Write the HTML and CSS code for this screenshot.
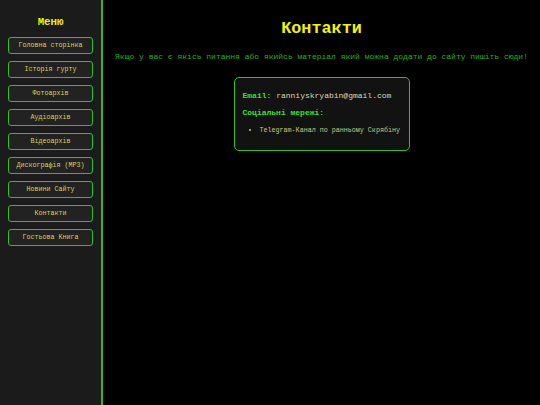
FILE: index.html
```html
<!DOCTYPE html>
<html lang="uk">
<head>
<meta charset="utf-8">
<title>Контакти</title>
<link rel="stylesheet" href="styles.css">
</head>
<body>
<div class="layout">
  <nav class="sidebar">
    <div class="menu-title">Меню</div>
    <a class="btn" href="#">Головна сторінка</a>
    <a class="btn" href="#">Історія гурту</a>
    <a class="btn" href="#">Фотоархів</a>
    <a class="btn" href="#">Аудіоархів</a>
    <a class="btn" href="#">Відеоархів</a>
    <a class="btn" href="#">Дискографія (MP3)</a>
    <a class="btn" href="#">Новини Сайту</a>
    <a class="btn" href="#">Контакти</a>
    <a class="btn" href="#">Гостьова Книга</a>
  </nav>
  <main class="content">
    <h1 class="title">Контакти</h1>
    <p class="intro">Якщо у вас є якісь питання або якийсь матеріал який можна додати до сайту пишіть сюди!</p>
    <div class="card">
      <div class="row"><span class="label">Email:</span> <span class="value">ranniyskryabin@gmail.com</span></div>
      <div class="row label">Соціальні мережі:</div>
      <ul class="links">
        <li>Telegram-Канал по ранньому Скрябіну</li>
      </ul>
    </div>
  </main>
</div>
</body>
</html>
```
FILE: styles.css
```css
html, body {
  margin: 0;
  padding: 0;
  height: 100%;
  background: #000;
  font-family: "Courier New", Courier, "Nimbus Mono PS", "Liberation Mono", monospace;
}
.layout {
  display: flex;
  min-height: 405px;
}
.sidebar {
  width: 103px;
  box-sizing: border-box;
  padding: 15px 8px 0 8px;
  background: #1b1b1b;
  border-right: 2px solid #2fb52f;
  display: flex;
  flex-direction: column;
  gap: 7px;
  flex-shrink: 0;
}
.menu-title {
  color: #f2f200;
  font-weight: bold;
  font-size: 10.7px;
  line-height: 14px;
  text-align: center;
  margin-bottom: 1px;
}
.btn {
  display: block;
  height: 17px;
  box-sizing: border-box;
  border: 1.5px solid #2fc02f;
  border-radius: 3px;
  background: #222;
  color: #d8cf58;
  font-size: 6.7px;
  line-height: 14px;
  text-align: center;
  text-decoration: none;
  white-space: nowrap;
}
.content {
  flex: 1;
  padding-top: 19px;
  text-align: center;
}
.title {
  margin: 0;
  color: #f5f500;
  font-size: 16.8px;
  line-height: 20px;
  font-weight: bold;
}
.intro {
  margin: 13px 0 15px 0;
  color: #22b022;
  font-size: 8px;
  line-height: 10px;
  white-space: nowrap;
}
.card {
  display: inline-block;
  text-align: left;
  width: 176px;
  box-sizing: border-box;
  border: 1.5px solid #2fc02f;
  border-radius: 5px;
  background: #121212;
  padding: 13px 8px 15px 8px;
}
.row {
  font-size: 8px;
  line-height: 10px;
  margin-bottom: 7px;
  white-space: nowrap;
}
.label {
  color: #33e033;
  font-weight: bold;
}
.value {
  color: #d8d8b0;
}
.links {
  margin: 0;
  padding-left: 17px;
  color: #c8c878;
  font-size: 6.7px;
  line-height: 10px;
  white-space: nowrap;
}
```
